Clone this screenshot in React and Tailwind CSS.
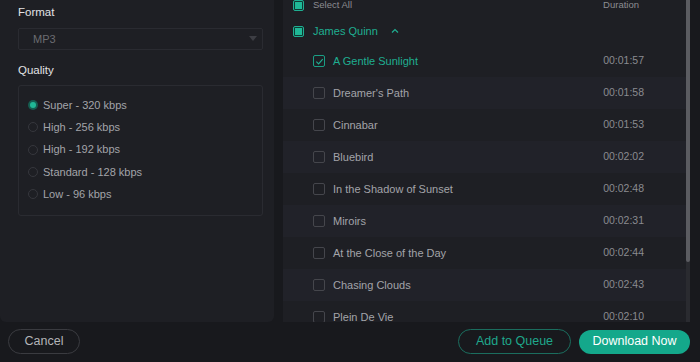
import React, { useState } from "react";

const qualities = [
  "Super - 320 kbps",
  "High - 256 kbps",
  "High - 192 kbps",
  "Standard - 128 kbps",
  "Low - 96 kbps",
];

const songs = [
  { title: "A Gentle Sunlight", time: "00:01:57", checked: true },
  { title: "Dreamer's Path", time: "00:01:58" },
  { title: "Cinnabar", time: "00:01:53" },
  { title: "Bluebird", time: "00:02:02" },
  { title: "In the Shadow of Sunset", time: "00:02:48" },
  { title: "Miroirs", time: "00:02:31" },
  { title: "At the Close of the Day", time: "00:02:44" },
  { title: "Chasing Clouds", time: "00:02:43" },
  { title: "Plein De Vie", time: "00:02:10" },
];

function PartialBox() {
  return (
    <span className="flex h-[11px] w-[11px] items-center justify-center rounded-[2px] border border-[#1fae91] bg-[#0f3a33]">
      <span className="h-[7px] w-[7px] bg-[#1fb896]" />
    </span>
  );
}

function CheckBox({ checked }) {
  if (checked) {
    return (
      <span className="flex h-[12px] w-[12px] items-center justify-center rounded-[2px] border border-[#1a9e84]">
        <svg width="9" height="9" viewBox="0 0 10 10" fill="none">
          <path d="M1.5 5.2 L4 7.6 L8.6 2.4" stroke="#1fae91" strokeWidth="1.3" />
        </svg>
      </span>
    );
  }
  return <span className="h-[12px] w-[12px] rounded-[2px] border border-[#45464c]" />;
}

export default function App() {
  const [quality, setQuality] = useState(0);

  return (
    <div
      className="flex h-[362px] w-[700px] flex-col overflow-hidden bg-[#18191d]"
      style={{ fontFamily: "'Liberation Sans', Arial, sans-serif" }}
    >
      <div className="flex h-[322px] shrink-0">
        {/* left settings panel */}
        <div className="w-[274px] shrink-0 rounded-b-[6px] bg-[#1e1f24] pl-[18px] pr-[11px] pt-[5px]">
          <div className="text-[11.5px] leading-[14px] text-[#e2e2e4]">Format</div>
          <div className="mt-[9px] flex h-[22px] items-center justify-between rounded-[2px] border border-[#2a2b31] pl-[14px] pr-[5px]">
            <span className="text-[11px] text-[#6b6c71]">MP3</span>
            <svg width="8" height="6" viewBox="0 0 8 6">
              <path d="M0 0 H8 L4 5 Z" fill="#3d3e44" />
            </svg>
          </div>
          <div className="mt-[13px] text-[11.5px] leading-[14px] text-[#e2e2e4]">Quality</div>
          <div className="mt-[8px] h-[131px] rounded-[3px] border border-[#2a2b31] px-[9px] pt-[8px]">
            {qualities.map((q, i) => (
              <div
                key={q}
                onClick={() => setQuality(i)}
                className="flex h-[22.3px] cursor-pointer items-center gap-[5px]"
              >
                {quality === i ? (
                  <span className="flex h-[10px] w-[10px] items-center justify-center rounded-full bg-[#155d50]">
                    <span className="h-[6px] w-[6px] rounded-full bg-[#20b896]" />
                  </span>
                ) : (
                  <span className="h-[10px] w-[10px] rounded-full border border-[#36373d]" />
                )}
                <span className="text-[11px] text-[#a3a4a9]">{q}</span>
              </div>
            ))}
          </div>
        </div>

        {/* right song list */}
        <div className="ml-[9px] flex flex-1 overflow-hidden">
          <div className="flex-1 overflow-hidden bg-[#1e1f24]">
            <div className="-mt-[8px]">
              <div className="flex h-[26px] items-center pl-[10px] pr-[47px]">
                <PartialBox />
                <span className="ml-[9px] text-[9.5px] text-[#8c8d92]">Select All</span>
                <span className="ml-auto text-[9.5px] text-[#8c8d92]">Duration</span>
              </div>
              <div className="flex h-[26px] items-center pl-[10px]">
                <PartialBox />
                <span className="ml-[9px] text-[11px] text-[#1fae91]">James Quinn</span>
                <svg className="ml-[13px]" width="8" height="6" viewBox="0 0 8 6" fill="none">
                  <path d="M1 4.5 L4 1.5 L7 4.5" stroke="#1fae91" strokeWidth="1.2" />
                </svg>
              </div>
              <div className="h-[1px]" />
              {songs.map((s, i) => (
                <div
                  key={s.title}
                  className={`flex h-[32px] items-center pl-[30px] pr-[42px] ${
                    i % 2 === 1 ? "bg-[#212229]" : "bg-[#1e1f24]"
                  }`}
                >
                  <CheckBox checked={s.checked} />
                  <span
                    className={`ml-[8px] text-[11px] ${
                      s.checked ? "text-[#1fae91]" : "text-[#a3a4a9]"
                    }`}
                  >
                    {s.title}
                  </span>
                  <span className="ml-auto text-[10.5px] text-[#8a8b90]">{s.time}</span>
                </div>
              ))}
            </div>
          </div>
          {/* scrollbar */}
          <div className="w-[4px] shrink-0 bg-[#2a2b30]">
            <div className="h-[262px] rounded-b-[2px] bg-[#5b5c61]" />
          </div>
          <div className="w-[10px] shrink-0" />
        </div>
      </div>

      {/* footer buttons */}
      <div className="flex flex-1 items-center px-[8px] pb-[1px]">
        <button className="h-[25px] w-[72px] rounded-full border border-[#3a3b40] text-[12.5px] text-[#b3b4b8]">
          Cancel
        </button>
        <button className="ml-auto h-[25px] w-[113px] rounded-full border border-[#1b6d5e] text-[12.5px] text-[#1fa88c]">
          Add to Queue
        </button>
        <button className="ml-[8px] mr-[2px] h-[24px] w-[111px] rounded-full bg-[#14a88b] text-[12.5px] text-white">
          Download Now
        </button>
      </div>
    </div>
  );
}
